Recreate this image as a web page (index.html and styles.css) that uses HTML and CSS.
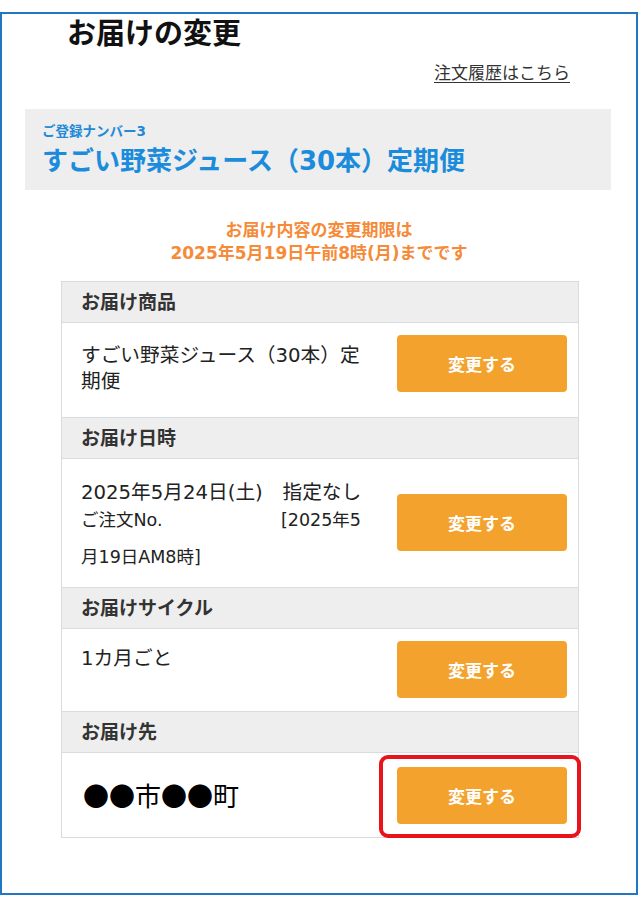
FILE: index.html
```html
<!DOCTYPE html>
<html lang="ja">
<head>
<meta charset="utf-8">
<title>お届けの変更</title>
<link rel="stylesheet" href="styles.css">
</head>
<body>
<div class="frame">
  <h1 class="title">お届けの変更</h1>
  <div class="history"><a class="history-link" href="#">注文履歴はこちら</a></div>
  <div class="plan">
    <div class="plan-no">ご登録ナンバー3</div>
    <div class="plan-name">すごい野菜ジュース（30本）定期便</div>
  </div>
  <p class="deadline">お届け内容の変更期限は<br>2025年5月19日午前8時(月)までです</p>
  <div class="table">
    <div class="head">お届け商品</div>
    <div class="row row--top">
      <div class="cell cell--product">
        <span class="line">すごい野菜ジュース（30本）定</span>
        <span class="line">期便</span>
      </div>
      <button class="btn" type="button">変更する</button>
    </div>
    <div class="head">お届け日時</div>
    <div class="row">
      <div class="cell cell--date">
        <span class="line">2025年5月24日(土)　指定なし</span>
        <span class="line line--sub"><span>ご注文No.</span><span>[2025年5</span></span>
        <span class="line line--sub line--last">月19日AM8時]</span>
      </div>
      <button class="btn" type="button">変更する</button>
    </div>
    <div class="head">お届けサイクル</div>
    <div class="row">
      <div class="cell cell--cycle">
        <span class="line">1カ月ごと</span>
      </div>
      <button class="btn" type="button">変更する</button>
    </div>
    <div class="head">お届け先</div>
    <div class="row row--last">
      <div class="cell cell--address">●●市●●町</div>
      <div class="annot"><button class="btn btn--flat" type="button">変更する</button></div>
    </div>
  </div>
</div>
</body>
</html>
```

FILE: styles.css
```css
* { box-sizing: border-box; }
html, body { margin: 0; padding: 0; background: #ffffff; }
body {
  font-family: "DejaVu Sans", "Noto Sans CJK JP", sans-serif;
  color: #333333;
}
.frame {
  width: 638px;
  height: 883px;
  margin-top: 12px;
  border: 2px solid #1f78c1;
  background: #ffffff;
}
.title {
  margin: 0;
  padding-left: 65px;
  font-family: "Noto Sans CJK JP", sans-serif;
  font-size: 29px;
  font-weight: 700;
  line-height: 34px;
  color: #111111;
}
.history {
  margin-top: 12px;
  padding-right: 66px;
  text-align: right;
  line-height: 24px;
}
.history-link {
  font-family: "Noto Sans CJK JP", sans-serif;
  font-size: 17px;
  color: #333333;
  text-decoration: underline;
  text-underline-offset: 3px;
}
.plan {
  margin: 23px 25px 0 23px;
  padding: 13px 17px 12px;
  background: #eeeeee;
}
.plan-no {
  font-size: 13.5px;
  font-weight: 700;
  line-height: 18px;
  color: #1e8ad8;
}
.plan-name {
  margin-top: 4px;
  font-size: 26px;
  font-weight: 700;
  line-height: 34px;
  color: #1b8bdc;
  white-space: nowrap;
}
.deadline {
  margin: 29px 0 0;
  text-align: center;
  font-size: 17px;
  font-weight: 700;
  line-height: 23px;
  color: #f58a38;
}
.table {
  margin: 16px 0 0 59px;
  width: 518px;
  border: 1px solid #d6dce2;
}
.head {
  height: 41px;
  padding-left: 19px;
  background: #eeeeee;
  border-bottom: 1px solid #d6dce2;
  font-size: 19px;
  font-weight: 700;
  line-height: 40px;
  color: #333333;
}
.row {
  display: flex;
  align-items: center;
  gap: 36px;
  padding: 0 11px 0 19px;
  border-bottom: 1px solid #d6dce2;
}
.row--last { border-bottom: none; min-height: 84px; }
.cell {
  width: 280px;
  align-self: flex-start;
  font-size: 19.7px;
  color: #222222;
}
.line { display: block; white-space: nowrap; }
.cell--product { padding: 20px 0 22px; line-height: 26px; }
.cell--date { padding: 21px 0 16px; line-height: 26px; }
.line--sub {
  display: flex;
  justify-content: space-between;
  font-size: 17.5px;
  line-height: 28px;
}
.line--last { margin-top: 9px; }
.cell--cycle { padding-top: 18px; line-height: 24px; }
.cell--address {
  align-self: center;
  padding-left: 2px;
  font-family: "Noto Sans CJK JP", sans-serif;
  font-size: 26px;
  line-height: 30px;
  color: #000000;
}
.btn {
  flex: none;
  width: 170px;
  height: 57px;
  margin: 12px 0 13px;
  border: none;
  border-radius: 4px;
  background: #f4a22e;
  color: #ffffff;
  font-family: "Noto Sans CJK JP", sans-serif;
  font-size: 17px;
  font-weight: 700;
  cursor: pointer;
}
.row--top { align-items: flex-start; }
.annot {
  position: relative;
  flex: none;
  margin: 13px 0;
}
.btn--flat { margin: 0; display: block; }
.annot::after {
  content: "";
  position: absolute;
  left: -18px;
  top: -12px;
  right: -14px;
  bottom: -14px;
  border: 4px solid #e9141b;
  border-radius: 9px;
  pointer-events: none;
}
```
